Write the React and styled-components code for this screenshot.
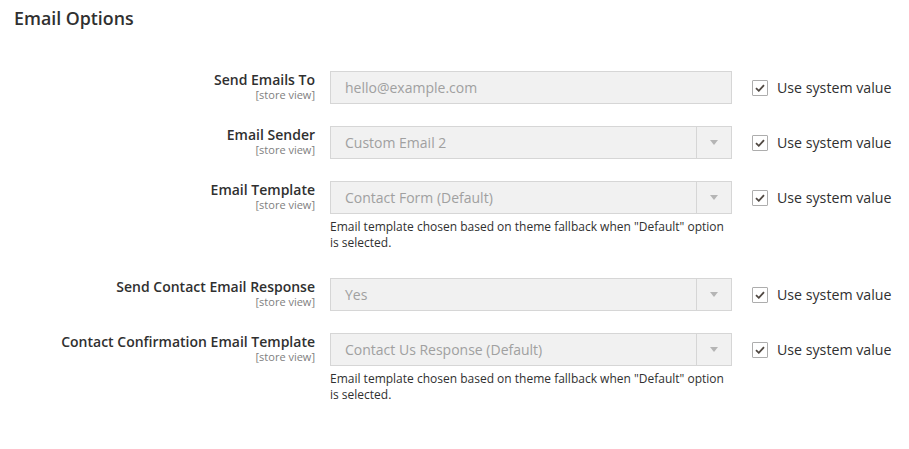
import React from 'react';
import styled, { createGlobalStyle } from 'styled-components';

const GlobalStyle = createGlobalStyle`
  html, body {
    margin: 0;
    padding: 0;
    background: #ffffff;
  }
  body {
    font-family: 'Open Sans', 'Liberation Sans', sans-serif;
    color: #303030;
  }
`;

const fields = [
  { label: 'Send Emails To', type: 'input', value: 'hello@example.com' },
  { label: 'Email Sender', type: 'select', value: 'Custom Email 2' },
  {
    label: 'Email Template',
    type: 'select',
    value: 'Contact Form (Default)',
    note: 'Email template chosen based on theme fallback when "Default" option is selected.',
  },
  { label: 'Send Contact Email Response', type: 'select', value: 'Yes' },
  {
    label: 'Contact Confirmation Email Template',
    type: 'select',
    value: 'Contact Us Response (Default)',
    note: 'Email template chosen based on theme fallback when "Default" option is selected.',
  },
];

const CheckIcon = () => (
  <svg width="10" height="8" viewBox="0 0 10 8">
    <path d="M1 4.2 L3.8 6.8 L9 1.2" fill="none" stroke="#514943" strokeWidth="1.8" />
  </svg>
);

const App = () => {
  return (
    <>
      <GlobalStyle />
      <Section>
        <Title>Email Options</Title>
        <Fieldset>
          {fields.map((f) => (
            <Row key={f.label}>
              <LabelCell>
                <LabelText>{f.label}</LabelText>
                <Scope>[store view]</Scope>
              </LabelCell>
              <Control>
                <Field>
                  <FieldValue>{f.value}</FieldValue>
                  {f.type === 'select' && (
                    <Arrow>
                      <Triangle />
                    </Arrow>
                  )}
                </Field>
                {f.note && <Note>{f.note}</Note>}
              </Control>
              <UseDefault>
                <CheckBox>
                  <CheckIcon />
                </CheckBox>
                <span>Use system value</span>
              </UseDefault>
            </Row>
          ))}
        </Fieldset>
      </Section>
    </>
  );
};

export default App;

const Section = styled.div`
  padding: 0 14px;
`;

const Title = styled.div`
  font-size: 17.8px;
  font-weight: 600;
  line-height: 22px;
  padding-top: 7px;
  color: #303030;
`;

const Fieldset = styled.div`
  padding-top: 42px;
  display: flex;
  flex-direction: column;
  gap: 22px;
`;

const Row = styled.div`
  display: grid;
  grid-template-columns: 301px 402px auto;
  column-gap: 15px;
  align-items: start;
`;

const LabelCell = styled.div`
  text-align: right;
  display: flex;
  flex-direction: column;
`;

const LabelText = styled.span`
  font-size: 14px;
  font-weight: 600;
  line-height: 17px;
  color: #303030;
`;

const Scope = styled.span`
  font-size: 11px;
  line-height: 13px;
  color: #808080;
`;

const Control = styled.div`
  width: 402px;
`;

const Field = styled.div`
  box-sizing: border-box;
  height: 33px;
  border: 1px solid #d6d6d6;
  background: #f1f1f1;
  display: flex;
  align-items: stretch;
`;

const FieldValue = styled.span`
  flex: 1;
  display: flex;
  align-items: center;
  padding-left: 14px;
  font-size: 14px;
  color: #a0a0a0;
`;

const Arrow = styled.span`
  width: 34px;
  border-left: 1px solid #d6d6d6;
  display: flex;
  align-items: center;
  justify-content: center;
`;

const Triangle = styled.span`
  width: 0;
  height: 0;
  border-left: 4px solid transparent;
  border-right: 4px solid transparent;
  border-top: 5px solid #b5b5b5;
`;

const Note = styled.div`
  margin-top: 5px;
  margin-bottom: 5px;
  font-size: 12px;
  line-height: 16px;
  color: #303030;
  padding-right: 5px;
`;

const UseDefault = styled.label`
  margin-left: 5px;
  height: 33px;
  display: flex;
  align-items: center;
  gap: 9px;
  font-size: 14.2px;
  color: #303030;
  white-space: nowrap;
`;

const CheckBox = styled.span`
  box-sizing: border-box;
  width: 16px;
  height: 16px;
  border: 1px solid #adadad;
  border-radius: 1px;
  background: #ffffff;
  display: flex;
  align-items: center;
  justify-content: center;
`;
